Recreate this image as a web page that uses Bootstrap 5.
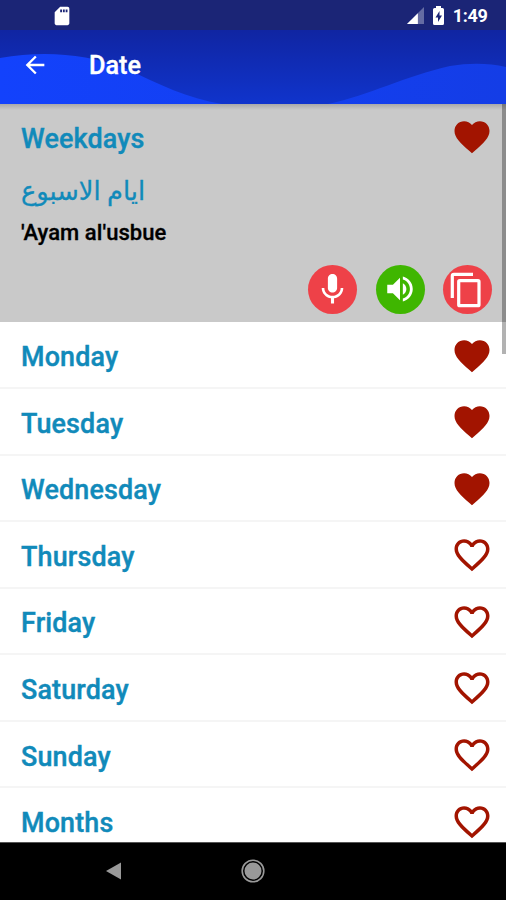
<!DOCTYPE html>
<html lang="en">
<head>
<meta charset="utf-8">
<meta name="viewport" content="width=device-width, initial-scale=1">
<title>Date</title>
<link href="https://cdn.jsdelivr.net/npm/bootstrap@5.3.0/dist/css/bootstrap.min.css" rel="stylesheet">
<style>
  body { font-family: Roboto, "DejaVu Sans", sans-serif; }
  svg { display: block; flex: none; }
  .screen { width: 506px; height: 900px; background: #fff; }
  .status { height: 30px; background: #1b2576; padding: 1px 18.5px 0 51px; font-size: 18px; letter-spacing: -.3px; }
  .battery { margin: 0 7px; }
  .appbar { height: 74px; background: linear-gradient(#1025a2, #1034cc); }
  .appbar .waves { inset: 0; }
  .bar-content { height: 70px; padding-left: 21px; gap: 40px; }
  .bar-title { font-size: 25.2px; font-weight: 500; line-height: 30px; padding-top: 2px; -webkit-text-stroke: .35px currentColor; }
  .content { height: 738px; }
  .content::before { content: ""; position: absolute; z-index: 2; left: 0; right: 0; top: 0; height: 6px; background: linear-gradient(rgba(0,0,0,.16), transparent); }
  .thumb { right: 0; top: 0; width: 4.5px; height: 250px; background: rgba(0,0,0,.3); z-index: 3; }
  .entry { height: 66.57px; padding: 2px 13px 0 21px; border-bottom: 2px solid #f5f5f5; }
  .phrase { font-size: 26.9px; font-weight: 500; line-height: 32px; color: #118aba; letter-spacing: .16px; padding-top: 3px; -webkit-text-stroke: .4px currentColor; }
  .heart { width: 42px; height: 42px; fill: #a21400; }
  .opened { height: 218.400px; background: #c9c9c9; padding-left: 21px; }
  .opened-head { height: 68px; padding-right: 13px; }
  .opened-head .phrase { padding-top: 2px; }
  .opened-head .heart { margin-top: -2px; }
  .arabic { font-size: 25.7px; line-height: 38px; height: 36px; color: #118aba; -webkit-text-stroke: .3px currentColor; }
  .latin { font-size: 22px; font-weight: 500; line-height: 28px; margin-top: 11px; color: #000; letter-spacing: .05px; -webkit-text-stroke: .3px currentColor; }
  .actions { padding: 17.5px 14px 0 0; gap: 18.5px; }
  .round { width: 49px; height: 49px; background: #ee4148; }
  .round.speak { background: #3fb600; }
  .navkeys { height: 58px; background: #000; border-top: 1px solid #555; padding: 0 0 2px 105.500px; gap: 120px; }
</style>
</head>
<body>
<svg width="0" height="0" class="position-absolute" aria-hidden="true">
  <symbol id="full" viewBox="0 0 24 24"><path d="M12 21.35l-1.45-1.32C5.4 15.36 2 12.28 2 8.5 2 5.42 4.42 3 7.5 3c1.74 0 3.41.81 4.5 2.09C13.09 3.81 14.76 3 16.5 3 19.58 3 22 5.42 22 8.5c0 3.78-3.4 6.86-8.55 11.54L12 21.35z"/></symbol>
  <symbol id="outline" viewBox="0 0 24 24"><path d="M16.5 3c-1.74 0-3.41.81-4.5 2.09C10.91 3.81 9.24 3 7.5 3 4.42 3 2 5.42 2 8.5c0 3.78 3.4 6.86 8.55 11.54L12 21.35l1.45-1.32C18.6 15.36 22 12.28 22 8.5 22 5.42 19.58 3 16.5 3zm-4.4 15.55l-.1.1-.1-.1C7.14 14.24 4 11.39 4 8.5 4 6.5 5.5 5 7.5 5c1.54 0 3.04.99 3.57 2.36h1.87C13.46 5.99 14.96 5 16.5 5c2 0 3.5 1.5 3.5 3.5 0 2.89-3.14 5.74-7.9 10.05z"/></symbol>
</svg>
<div class="screen overflow-hidden d-flex flex-column">
  <div class="status d-flex align-items-center text-white fw-medium">
    <svg width="22" height="22" viewBox="0 0 24 24" fill="#fff"><path d="M18 2h-8L4.020 8 4 20c0 1.100.9 2 2 2h12c1.100 0 2-.9 2-2V4c0-1.100-.9-2-2-2zm-6 6h-2V5h2v3zm3 0h-2V5h2v3zm3 0h-2V5h2v3z"/></svg>
    <svg class="ms-auto" width="17" height="17" viewBox="0 0 18 18"><path d="M0 18 18 0v18z" fill="#656ca3"/><path d="M0 18 11.500 6.500V18z" fill="#fff"/></svg>
    <svg class="battery" width="15" height="20" viewBox="0 0 15 20"><path d="M5 0h5v2h1.500Q13 2 13 3.500v14q0 1.500-1.500 1.500h-8Q2 19 2 17.500v-14Q2 2 3.500 2H5z" fill="#fff"/><path d="M8.500 5 4.500 11.500H7V16l4-6.500H8.500z" fill="#1b2576"/></svg>
    <span class="fw-bold">1:49</span>
  </div>
  <header class="appbar position-relative">
    <svg class="waves position-absolute" width="506" height="74" viewBox="0 0 506 74"><defs><linearGradient id="w" x1="0" x2="1"><stop offset="0" stop-color="#1342fc"/><stop offset="1" stop-color="#143de6"/></linearGradient></defs><path d="M0 28C45 20 85 24 125 38C160 55 187 68 222 74H0zM328 74C370 65 405 46 450 36Q480 31 506 37V74z" fill="url(#w)"/></svg>
    <div class="bar-content position-relative d-flex align-items-center text-white">
      <svg width="28" height="28" viewBox="0 0 24 24" fill="#fff"><path d="M20 11H7.830l5.590-5.590L12 4l-8 8 8 8 1.410-1.410L7.830 13H20v-2z"/></svg>
      <span class="bar-title">Date</span>
    </div>
  </header>
  <main class="content position-relative overflow-hidden">
    <div class="thumb position-absolute"></div>
    <section class="opened">
      <div class="opened-head d-flex align-items-center justify-content-between"><span class="phrase">Weekdays</span><svg class="heart"><use href="#full"/></svg></div>
      <div class="arabic text-start"><span lang="ar" dir="rtl">ايام الاسبوع</span></div>
      <div class="latin">'Ayam al'usbue</div>
      <div class="actions d-flex justify-content-end">
        <div class="round rounded-circle d-flex align-items-center justify-content-center"><svg width="37" height="37" viewBox="0 0 24 24" fill="#fff"><path d="M12 14c1.660 0 2.990-1.340 2.990-3L15 5c0-1.660-1.340-3-3-3S9 3.340 9 5v6c0 1.660 1.340 3 3 3zm5.300-3c0 3-2.540 5.100-5.300 5.100S6.700 14 6.700 11H5c0 3.410 2.720 6.230 6 6.720V21h2v-3.280c3.280-.48 6-3.300 6-6.720h-1.700z"/></svg></div>
        <div class="round speak rounded-circle d-flex align-items-center justify-content-center"><svg width="34" height="34" viewBox="0 0 24 24" fill="#fff"><path d="M3 9v6h4l5 5V4L7 9H3zm13.500 3c0-1.770-1.020-3.290-2.500-4.030v8.050c1.480-.73 2.500-2.250 2.500-4.020zM14 3.230v2.060c2.890.86 5 3.540 5 6.710s-2.110 5.850-5 6.710v2.060c4.010-.91 7-4.490 7-8.770s-2.990-7.860-7-8.770z"/></svg></div>
        <div class="round rounded-circle"><svg width="49" height="49" viewBox="0 0 49 49" fill="none" stroke="#fff" stroke-width="3.200" stroke-linejoin="round"><path d="M9.300 33V11q0-1.700 1.700-1.700h19"/><rect x="15.700" y="15.700" width="20.300" height="25" rx="1"/></svg></div>
      </div>
    </section>
    <div class="entry d-flex align-items-center justify-content-between"><span class="phrase">Monday</span><svg class="heart"><use href="#full"/></svg></div>
    <div class="entry d-flex align-items-center justify-content-between"><span class="phrase">Tuesday</span><svg class="heart"><use href="#full"/></svg></div>
    <div class="entry d-flex align-items-center justify-content-between"><span class="phrase">Wednesday</span><svg class="heart"><use href="#full"/></svg></div>
    <div class="entry d-flex align-items-center justify-content-between"><span class="phrase">Thursday</span><svg class="heart"><use href="#outline"/></svg></div>
    <div class="entry d-flex align-items-center justify-content-between"><span class="phrase">Friday</span><svg class="heart"><use href="#outline"/></svg></div>
    <div class="entry d-flex align-items-center justify-content-between"><span class="phrase">Saturday</span><svg class="heart"><use href="#outline"/></svg></div>
    <div class="entry d-flex align-items-center justify-content-between"><span class="phrase">Sunday</span><svg class="heart"><use href="#outline"/></svg></div>
    <div class="entry d-flex align-items-center justify-content-between"><span class="phrase">Months</span><svg class="heart"><use href="#outline"/></svg></div>
  </main>
  <footer class="navkeys d-flex align-items-center">
    <svg width="15.500" height="18" viewBox="0 0 16 18"><path d="M0 9 16 0v18z" fill="#999"/></svg>
    <svg width="24" height="24" viewBox="0 0 24 24"><circle cx="12" cy="12" r="10.800" fill="none" stroke="#999" stroke-width="1.600"/><circle cx="12" cy="12" r="8.500" fill="#999"/></svg>
  </footer>
</div>
<script src="https://cdn.jsdelivr.net/npm/bootstrap@5.3.0/dist/js/bootstrap.bundle.min.js"></script>
</body>
</html>
